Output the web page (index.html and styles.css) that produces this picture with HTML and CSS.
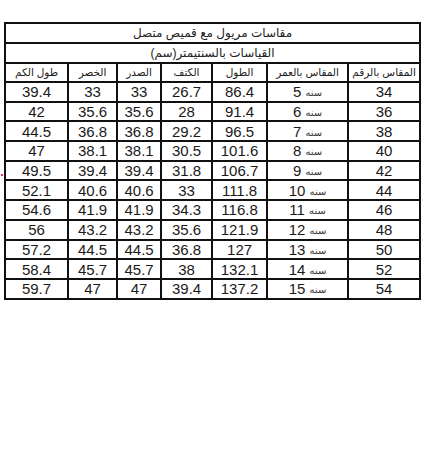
FILE: index.html
```html
<!DOCTYPE html>
<html lang="ar">
<head>
<meta charset="utf-8">
<link rel="stylesheet" href="styles.css">
</head>
<body>
<div class="page">
  <span class="mark"></span>
  <table class="sizes" dir="rtl">
    <colgroup>
      <col class="c1"><col class="c2"><col class="c3"><col class="c4"><col class="c5"><col class="c6"><col class="c7">
    </colgroup>
    <tr class="title"><td colspan="7">مقاسات مريول مع قميص متصل</td></tr>
    <tr class="title"><td colspan="7">القياسات بالسنتيمتر(سم)</td></tr>
    <tr class="head">
      <td>المقاس بالرقم</td><td>المقاس بالعمر</td><td>الطول</td><td>الكتف</td><td>الصدر</td><td>الخصر</td><td>طول الكم</td>
    </tr>
    <tr><td>34</td><td><span class="age">سنه</span> 5</td><td>86.4</td><td>26.7</td><td>33</td><td>33</td><td>39.4</td></tr>
    <tr><td>36</td><td><span class="age">سنه</span> 6</td><td>91.4</td><td>28</td><td>35.6</td><td>35.6</td><td>42</td></tr>
    <tr><td>38</td><td><span class="age">سنه</span> 7</td><td>96.5</td><td>29.2</td><td>36.8</td><td>36.8</td><td>44.5</td></tr>
    <tr><td>40</td><td><span class="age">سنه</span> 8</td><td>101.6</td><td>30.5</td><td>38.1</td><td>38.1</td><td>47</td></tr>
    <tr><td>42</td><td><span class="age">سنه</span> 9</td><td>106.7</td><td>31.8</td><td>39.4</td><td>39.4</td><td>49.5</td></tr>
    <tr><td>44</td><td><span class="age">سنه</span> 10</td><td>111.8</td><td>33</td><td>40.6</td><td>40.6</td><td>52.1</td></tr>
    <tr><td>46</td><td><span class="age">سنه</span> 11</td><td>116.8</td><td>34.3</td><td>41.9</td><td>41.9</td><td>54.6</td></tr>
    <tr><td>48</td><td><span class="age">سنه</span> 12</td><td>121.9</td><td>35.6</td><td>43.2</td><td>43.2</td><td>56</td></tr>
    <tr><td>50</td><td><span class="age">سنه</span> 13</td><td>127</td><td>36.8</td><td>44.5</td><td>44.5</td><td>57.2</td></tr>
    <tr><td>52</td><td><span class="age">سنه</span> 14</td><td>132.1</td><td>38</td><td>45.7</td><td>45.7</td><td>58.4</td></tr>
    <tr><td>54</td><td><span class="age">سنه</span> 15</td><td>137.2</td><td>39.4</td><td>47</td><td>47</td><td>59.7</td></tr>
  </table>
</div>
</body>
</html>
```

FILE: styles.css
```css
html, body {
  margin: 0;
  padding: 0;
  background: #ffffff;
}
.page {
  position: relative;
  padding: 22px 0 0 4px;
  width: 435px;
  height: 450px;
  box-sizing: border-box;
}
.mark {
  position: absolute;
  left: 1px;
  top: 174px;
  width: 2px;
  height: 2px;
  background: #d04050;
}
.sizes {
  border-collapse: collapse;
  table-layout: fixed;
  width: 417px;
  font-family: "Liberation Sans", "DejaVu Sans", sans-serif;
  color: #1a1a1a;
}
.c1 { width: 72px; }
.c2 { width: 81px; }
.c3 { width: 55px; }
.c4 { width: 51px; }
.c5 { width: 44px; }
.c6 { width: 49px; }
.c7 { width: 63px; }
.sizes td {
  border: 2px solid #111;
  height: 17.7px;
  padding: 0;
  text-align: center;
  font-size: 15px;
  line-height: 15px;
  white-space: nowrap;
  overflow: hidden;
}
.sizes .title td {
  height: 18px;
  text-align: center;
  font-size: 12px;
  color: #222;
}
.sizes .head td {
  height: 17px;
  font-size: 10.5px;
  color: #222;
  letter-spacing: -0.2px;
}
.age {
  display: inline-block;
  font-size: 10px;
  line-height: 10px;
  vertical-align: 1px;
  color: #333;
}
```
